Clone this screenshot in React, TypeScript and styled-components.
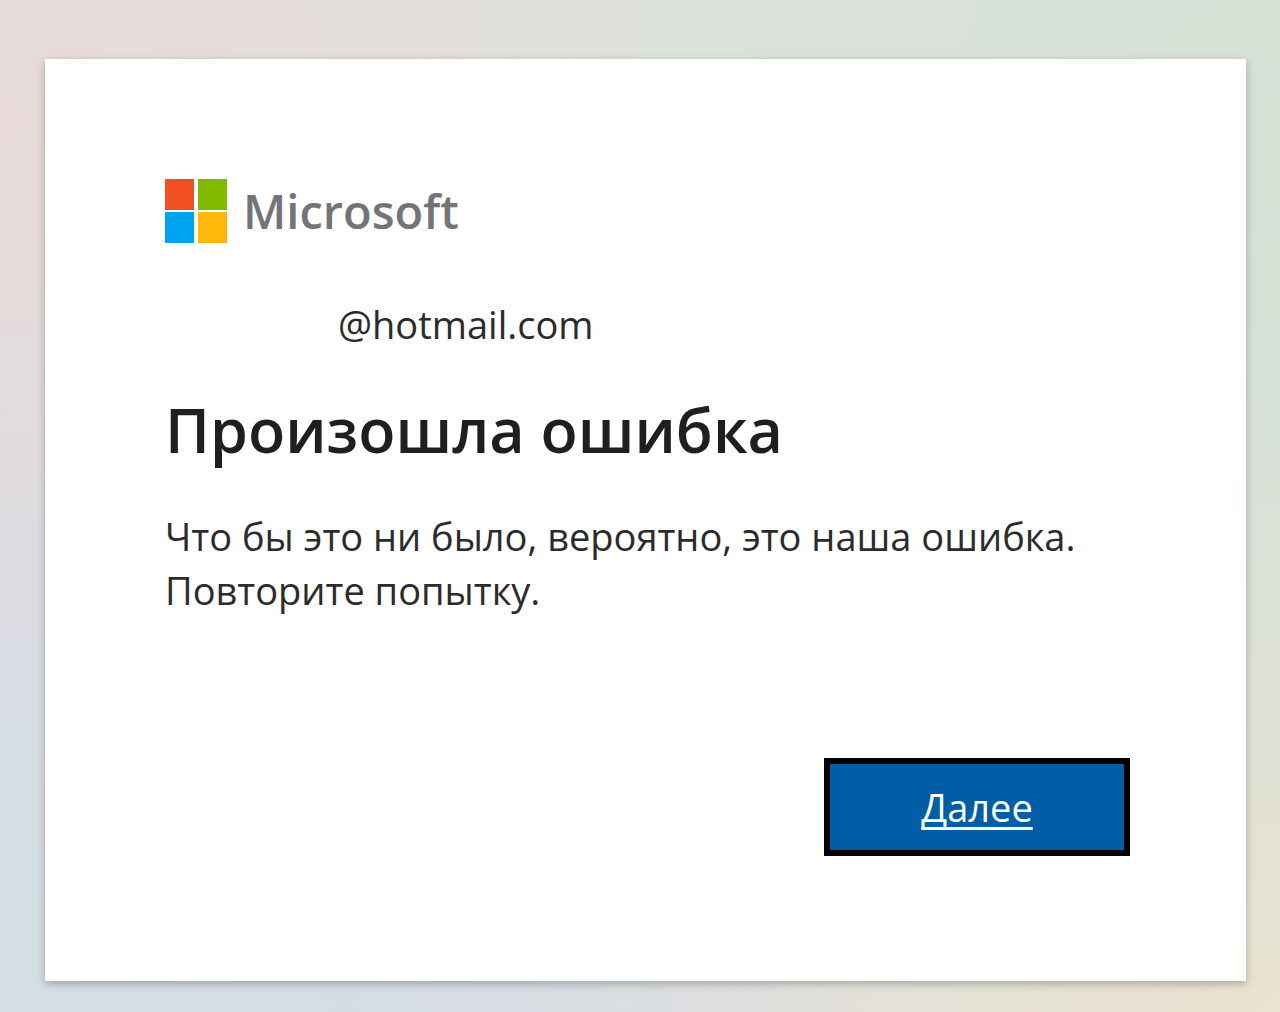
import React from "react";
import styled, { createGlobalStyle } from "styled-components";

const GlobalStyle = createGlobalStyle`
  *, *::before, *::after { box-sizing: border-box; }
  body {
    margin: 0;
    color: #1f1f1f;
    font-family: "Segoe UI", "Open Sans", "Noto Sans", sans-serif;
  }
`;

const Page = styled.div`
  min-height: 100vh;
  padding: 59px 34px 31px 45px;
  background:
    radial-gradient(circle at 0% 12%, #e7dad8 0%, #e7dad800 42%),
    radial-gradient(circle at 100% 15%, #d4e1d5 0%, #d4e1d500 60%),
    radial-gradient(circle at 100% 100%, #ebe3cf 0%, #ebe3cf00 38%),
    radial-gradient(circle at 0% 95%, #d4dfe5 0%, #d6dce5 22%, #d6dce500 60%),
    #e0e0dd;
`;

const Card = styled.main`
  display: flex;
  flex-direction: column;
  padding: 120px 116px 125px 120px;
  background: #fff;
  box-shadow: 0 3px 8px rgba(0, 0, 0, 0.26);
`;

const Brand = styled.div`
  display: flex;
  align-items: center;
  gap: 16px;
  height: 64px;
`;

const Squares = styled.svg`
  width: 62px;
  height: 64px;
`;

const BrandName = styled.span`
  color: #737477;
  font-size: 47px;
  font-weight: 600;
  line-height: 64px;
`;

const Identity = styled.div`
  margin-top: 54px;
  padding-left: 173px;
  color: #2b2b2b;
  font-size: 38px;
  line-height: 54px;
`;

const Title = styled.h1`
  margin: 39px 0;
  font-size: 61px;
  font-weight: 600;
  line-height: 80px;
`;

const Message = styled.p`
  max-width: 960px;
  margin: 0;
  color: #2b2b2b;
  font-size: 38px;
  line-height: 54px;
`;

const Actions = styled.div`
  display: flex;
  justify-content: flex-end;
  margin-top: 141px;
`;

const PrimaryButton = styled.button`
  min-width: 306px;
  height: 98px;
  padding: 0 24px;
  border: 6px solid #000;
  background: #005da6;
  color: #fff;
  font: inherit;
  font-size: 38px;
  line-height: 54px;
  text-decoration: underline;
  text-decoration-thickness: 3px;
  text-underline-offset: 5px;
  text-decoration-skip-ink: none;
  cursor: pointer;
`;

export default function App() {
  return (
    <>
      <GlobalStyle />
      <Page>
        <Card>
          <Brand>
            <Squares viewBox="0 0 62 64" aria-hidden="true">
              <rect width="29" height="31" fill="#f05024" />
              <rect x="33" width="29" height="31" fill="#7fb900" />
              <rect y="33" width="29" height="31" fill="#00a3ee" />
              <rect x="33" y="33" width="29" height="31" fill="#fdb80a" />
            </Squares>
            <BrandName>Microsoft</BrandName>
          </Brand>
          <Identity>@hotmail.com</Identity>
          <Title>Произошла ошибка</Title>
          <Message>
            Что бы это ни было, вероятно, это наша ошибка. Повторите попытку.
          </Message>
          <Actions>
            <PrimaryButton type="button">Далее</PrimaryButton>
          </Actions>
        </Card>
      </Page>
    </>
  );
}
